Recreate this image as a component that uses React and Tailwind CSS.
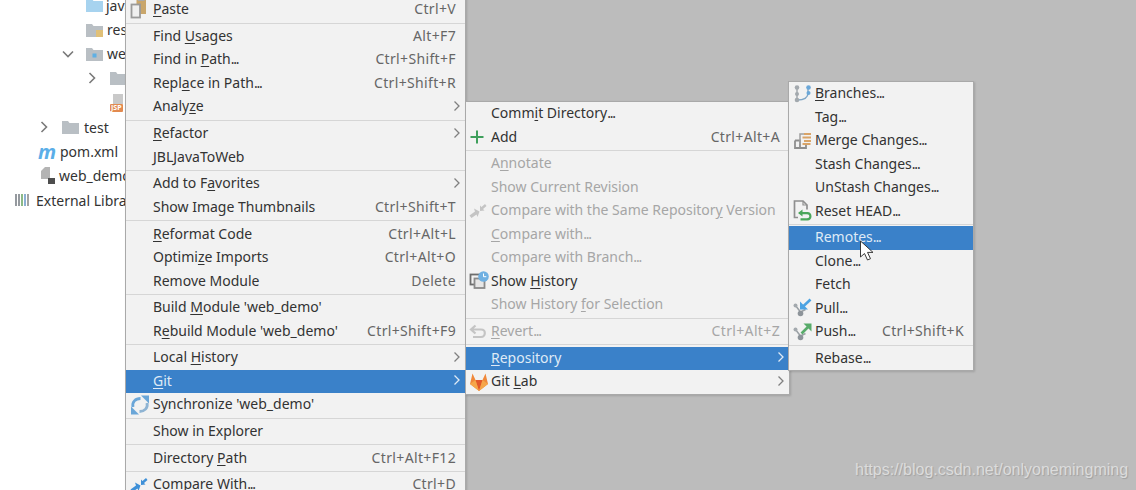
import React from "react";

const FONT = "[font-family:'Noto_Sans','Open_Sans',sans-serif]";

const Branches = () => (
  <svg width="20" height="20" viewBox="0 0 20 20" fill="none">
    <path d="M4 4v12" stroke="#a3a9ae" strokeWidth="1.500" />
    <path d="M4 16c6 0 11-1 11-7V4" stroke="#7fa6c6" strokeWidth="1.400" />
    <circle cx="4" cy="3.500" r="2.300" fill="#a3a9ae" />
    <circle cx="4" cy="10" r="2" fill="#a3a9ae" />
    <circle cx="4" cy="16" r="2.300" fill="#a3a9ae" />
    <circle cx="15.500" cy="3.500" r="2.300" fill="#6aa7d8" />
    <circle cx="15.500" cy="9" r="2" fill="#6aa7d8" />
  </svg>
);
const Merge = () => (
  <svg width="20" height="20" viewBox="0 0 20 20" fill="none">
    <path d="M2 9.500h5v7.500h6v-3M2 9.500V17h5" stroke="#8f8f8f" strokeWidth="1.800" />
    <path d="M7 13V3h5" stroke="#a0a0a0" strokeWidth="1.500" />
    <path d="M11 3h7M9.500 6.500h8.500M11 10h7M9.500 13h8" stroke="#d9a468" strokeWidth="1.800" />
  </svg>
);
const Reset = () => (
  <svg width="20" height="23" viewBox="0 0 20 23" fill="none">
    <path d="M5 18H1.500V1.500h8.500l4 4V10" stroke="#8f8f8f" strokeWidth="1.700" />
    <path d="M10 1.500v4h4" stroke="#8f8f8f" strokeWidth="1.200" />
    <path d="M9.500 10L5 13.500 9.500 17v-2.200h4.500c1.500 0 2.300.8 2.300 2s-.8 2-2.300 2H7.500V21H14.500c2.500 0 4-1.800 4-4.200s-1.500-4.200-4-4.200H9.500z" fill="#4aa65a" />
  </svg>
);
const Pull = () => (
  <svg width="20" height="20" viewBox="0 0 20 20" fill="none">
    <path d="M2.500 7.500L7.500 14l5-2.500" stroke="#9aa0a5" strokeWidth="1.500" />
    <circle cx="7.500" cy="15.500" r="2.800" fill="#8d949a" />
    <circle cx="2.500" cy="7.500" r="2" fill="#a3a9ae" />
    <path d="M17.500 1.500L9.500 9" stroke="#4ba3e3" strokeWidth="2.600" />
    <path d="M7 3.500V11.500h8z" fill="#4ba3e3" />
  </svg>
);
const Push = () => (
  <svg width="20" height="20" viewBox="0 0 20 20" fill="none">
    <path d="M2.500 7.500L7.500 14l5-2.500" stroke="#9aa0a5" strokeWidth="1.500" />
    <circle cx="7.500" cy="15.500" r="2.800" fill="#8d949a" />
    <circle cx="2.500" cy="7.500" r="2" fill="#a3a9ae" />
    <path d="M8.500 11.500L16 4" stroke="#58ab6a" strokeWidth="2.600" />
    <path d="M10.500 1.500H18.500V9.500z" fill="#58ab6a" />
  </svg>
);
const Plus = () => (
  <svg width="16" height="16" viewBox="0 0 16 16">
    <path d="M8 1.500v13M1.500 8h13" stroke="#3f9f5c" strokeWidth="2" />
  </svg>
);
const Compare = ({ color = "#3e90d8" }) => (
  <svg width="18" height="16" viewBox="0 0 18 16">
    <path d="M0.500 12.500L6 8.500 5 5.500 10.500 8.500 8.500 14 7.500 11.500 2.500 15z" fill={color} />
    <path d="M11 8V2.500L12.500 4 16 1 17.500 3 14 6 15.500 7.500z" fill={color} />
  </svg>
);
const History = () => (
  <svg width="21" height="20" viewBox="0 0 21 20" fill="none">
    <rect x="1.500" y="3.500" width="12" height="10" stroke="#6d6d6d" strokeWidth="1.800" />
    <rect x="5.500" y="7.500" width="10" height="9.500" fill="#e6e6e6" stroke="#8a8a8a" strokeWidth="1.800" />
    <circle cx="14.500" cy="5.500" r="5.300" fill="#6fb0e2" />
    <path d="M14.500 2.500v3.200h2.800" stroke="#fff" strokeWidth="1" />
  </svg>
);
const Revert = () => (
  <svg width="18" height="16" viewBox="0 0 18 16" fill="none">
    <path d="M6.500 1.500L2 5.500l4.500 4M2.500 5.500H12c2.500 0 3.800 1.500 3.800 3.500S14.500 13 12 13H4" stroke="#c4c4c4" strokeWidth="2.200" />
  </svg>
);
const GitLab = () => (
  <svg width="20" height="19" viewBox="0 0 20 19">
    <path d="M10 18.500L1 11.500 3.500 1 6.500 7.500h7L16.500 1 19 11.500z" fill="#f0883a" />
    <path d="M10 18.500L6.500 7.500h7z" fill="#e2572b" />
    <path d="M10 18.500L1 11.500l5.500-4z" fill="#f5a64a" />
    <path d="M10 18.500l9-7-5.500-4z" fill="#f5a64a" />
  </svg>
);
const Sync = () => (
  <svg width="20" height="20" viewBox="0 0 20 20" fill="none">
    <path d="M3 12C1.800 7 5.500 3.500 10.500 3.500" stroke="#6aa6d8" strokeWidth="2.800" />
    <path d="M17 8c1.200 5-2.500 8.500-7.500 8.500" stroke="#8fb4d3" strokeWidth="2.800" />
    <path d="M11 .5h8V8.500zM9 19.500H1V11.500z" fill="#6aa6d8" />
  </svg>
);
const Paste = () => (
  <svg width="18" height="22" viewBox="0 0 18 22" fill="none">
    <rect x="6.500" y="0" width="9.500" height="15" fill="#c9a66b" />
    <rect x="8" y="-2" width="6.500" height="4" fill="#a9a9a9" />
    <rect x="1.500" y="5.500" width="8.500" height="13" fill="#efefef" stroke="#9a9a9a" strokeWidth="1.800" />
  </svg>
);
const Chevron = ({ white }) => (
  <svg width="8" height="12" viewBox="0 0 8 12" fill="none" className="shrink-0">
    <path d="M1.500 1.500L6 6l-4.500 4.500" stroke={white ? "#dfeaf5" : "#808080"} strokeWidth="1.300" />
  </svg>
);

const Sep = () => <div className="h-[3.2px] flex items-center"><div className="h-px w-full bg-[#d6d6d6]" /></div>;

function Row({ label, shortcut, icon, sub, active, disabled, textX, iconX }) {
  const color = active ? "text-[#dfeaf6]" : disabled ? "text-[#a6a6a6]" : "text-[#333333]";
  return (
    <div className={`relative flex h-[23.5px] items-center pb-[2px] ${active ? "bg-[#3a81c9]" : ""} ${color}`} style={{ paddingLeft: textX }}>
      {icon && <span className="absolute top-1/2 flex -translate-y-1/2 items-center" style={{ left: iconX }}>{icon}</span>}
      <span className="whitespace-nowrap">{label}</span>
      {shortcut && <span className={`ml-auto pr-[9px] whitespace-nowrap tracking-[0.35px] ${disabled ? "text-[#a6a6a6]" : "text-[#666666]"}`}>{shortcut}</span>}
      {sub && <span className="ml-auto pr-[4px] flex"><Chevron white={active} /></span>}
    </div>
  );
}

const U = ({ children }) => <u className="underline underline-offset-2">{children}</u>;
const D = () => <span className="tracking-[-1.200px]">...</span>;

const menu1 = [
  { label: <><U>P</U>aste</>, shortcut: "Ctrl+V", icon: <Paste /> }, "-",
  { label: <>Find <U>U</U>sages</>, shortcut: "Alt+F7" },
  { label: <>Find in <U>P</U>ath<D /></>, shortcut: "Ctrl+Shift+F" },
  { label: <>Repl<U>a</U>ce in Path<D /></>, shortcut: "Ctrl+Shift+R" },
  { label: <>Analy<U>z</U>e</>, sub: 1 }, "-",
  { label: <><U>R</U>efactor</>, sub: 1 },
  { label: "JBLJavaToWeb" }, "-",
  { label: <>Add to F<U>a</U>vorites</>, sub: 1 },
  { label: "Show Image Thumbnails", shortcut: "Ctrl+Shift+T" }, "-",
  { label: <><U>R</U>eformat Code</>, shortcut: "Ctrl+Alt+L" },
  { label: <>Optimi<U>z</U>e Imports</>, shortcut: "Ctrl+Alt+O" },
  { label: "Remove Module", shortcut: "Delete" }, "-",
  { label: <>Build <U>M</U>odule 'web_demo'</> },
  { label: <>R<U>e</U>build Module 'web_demo'</>, shortcut: "Ctrl+Shift+F9" }, "-",
  { label: <>Local <U>H</U>istory</>, sub: 1 },
  { label: <><U>G</U>it</>, sub: 1, active: 1 },
  { label: <>Synchronize 'web_demo'</>, icon: <Sync /> }, "-",
  { label: "Show in Explorer" }, "-",
  { label: <>Directory <U>P</U>ath</>, shortcut: "Ctrl+Alt+F12" }, "-",
  { label: <>Compare With<D /></>, shortcut: "Ctrl+D", icon: <Compare /> },
];

const menu2 = [
  { label: <>Comm<U>i</U>t Directory<D /></> },
  { label: "Add", shortcut: "Ctrl+Alt+A", icon: <Plus /> }, "-",
  { label: <>A<U>n</U>notate</>, disabled: 1 },
  { label: "Show Current Revision", disabled: 1 },
  { label: <>Compare with the Same Repositor<U>y</U> Version</>, disabled: 1, icon: <Compare color="#c4c4c4" /> },
  { label: <><U>C</U>ompare with<D /></>, disabled: 1 },
  { label: <>Compare with Branch<D /></>, disabled: 1 },
  { label: <>Show <U>H</U>istory</>, icon: <History /> },
  { label: <>Show History <U>f</U>or Selection</>, disabled: 1 }, "-",
  { label: <><U>R</U>evert<D /></>, shortcut: "Ctrl+Alt+Z", disabled: 1, icon: <Revert /> }, "-",
  { label: <><U>R</U>epository</>, sub: 1, active: 1 },
  { label: <>Git <U>L</U>ab</>, sub: 1, icon: <GitLab /> },
];

const menu3 = [
  { label: <><U>B</U>ranches<D /></>, icon: <Branches /> },
  { label: <>Tag<D /></> },
  { label: <>Merge Changes<D /></>, icon: <Merge /> },
  { label: <>Stash Changes<D /></> },
  { label: <>UnStash Changes<D /></> },
  { label: <>Reset HEAD<D /></>, icon: <Reset /> }, "-",
  { label: <>Remotes<D /></>, active: 1 },
  { label: <>Clone<D /></> },
  { label: "Fetch" },
  { label: <>Pull<D /></>, icon: <Pull /> },
  { label: <>Push<D /></>, shortcut: "Ctrl+Shift+K", icon: <Push /> }, "-",
  { label: <>Rebase<D /></> },
];

function Menu({ items, className, textX, iconX }) {
  return (
    <div className={`absolute border border-[#a9a9a9] bg-[#f2f2f2] text-[14px] shadow-[1px_1px_2px_rgba(0,0,0,0.15)] ${className}`}>
      {items.map((it, i) => it === "-" ? <Sep key={i} /> : <Row key={i} {...it} textX={textX} iconX={iconX} />)}
    </div>
  );
}

const Folder = ({ color = "#b9bfc4", dot, doc }) => (
  <svg width="17" height="14" viewBox="0 0 17 14" className="shrink-0">
    <path d="M0 1h6l1.500 2H17v11H0z" fill={color} />
    {dot && <rect x="6.500" y="6.500" width="4" height="4" fill="#5fb0e4" />}
    {doc && <g fill="#e0c078"><rect x="10" y="7" width="7" height="7" /></g>}
  </svg>
);
const Arrow = ({ down }) => (
  <svg width="12" height="12" viewBox="0 0 12 12" fill="none" className="shrink-0">
    <path d={down ? "M1 3.500L6 8.500l5-5" : "M3.500 1L8.500 6l-5 5"} stroke="#7a7a7a" strokeWidth="1.600" />
  </svg>
);

function TreeRow({ pad, arrow, icon, text, gap = 4 }) {
  return (
    <div className="flex h-[24.4px] items-center whitespace-nowrap" style={{ paddingLeft: pad }}>
      {arrow}
      {icon}
      <span style={{ marginLeft: gap }}>{text}</span>
    </div>
  );
}

const Jsp = () => (
  <span className="relative block h-[18px] w-[16px] shrink-0">
    <span className="absolute left-[3px] top-0 h-[10px] w-[10px] bg-[#c9c9c9]" />
    <span className="absolute bottom-0 left-0 rounded-[1px] bg-[#e28a50] px-[1px] text-[7px] font-bold leading-[8px] text-white">JSP</span>
  </span>
);

export default function App() {
  return (
    <div className={`relative flex h-[490px] w-[1136px] overflow-hidden bg-[#bcbcbc] ${FONT}`}>
      <div className="w-[126px] shrink-0 overflow-hidden bg-white text-[14px] text-[#333333]">
        <div className="-mt-[7px]">
          <TreeRow pad={86} icon={<Folder color="#a7d3ef" />} text="java" gap={3} />
          <TreeRow pad={86} icon={<Folder doc />} text="resources" />
          <TreeRow pad={62} arrow={<Arrow down />} icon={<span className="ml-[12px] flex shrink-0"><Folder dot /></span>} text="webapp" />
          <TreeRow pad={86} arrow={<Arrow />} icon={<span className="ml-[12px] flex shrink-0"><Folder /></span>} text="WEB-INF" />
          <TreeRow pad={110} icon={<Jsp />} text="index.jsp" />
          <TreeRow pad={38} arrow={<Arrow />} icon={<span className="ml-[12px] flex shrink-0"><Folder /></span>} text="test" gap={5} />
          <TreeRow pad={38} icon={<span className="w-[17px] shrink-0 text-[20px] font-bold italic leading-none text-[#5aaee8]">m</span>} text="pom.xml" gap={5} />
          <TreeRow pad={40} icon={
            <svg width="15" height="17" viewBox="0 0 15 17" className="shrink-0"><path d="M1 4l4-4h5v12H1z" fill="#b4b4b4" /><rect x="8" y="11" width="7" height="6" fill="#4d4d4d" /></svg>
          } text="web_demo.iml" />
          <TreeRow pad={15} icon={
            <svg width="16" height="14" viewBox="0 0 16 14" className="shrink-0"><path d="M1 1v12M4 1v12" stroke="#8a8f95" strokeWidth="1.800" /><path d="M7 1v12" stroke="#7fb27a" strokeWidth="1.800" /><path d="M10 1v12" stroke="#7fa8d0" strokeWidth="1.800" /><path d="M13 1v12" stroke="#9a9a9a" strokeWidth="1.800" /></svg>
          } text="External Libraries" gap={5} />
        </div>
      </div>
      <div className="flex-1" />

      <Menu items={menu1} className="left-[125px] top-[-3px] w-[341px]" textX={27} iconX={4} />
      <Menu items={menu2} className="left-[465px] top-[101px] w-[325px]" textX={25} iconX={3} />
      <Menu items={menu3} className="left-[788px] top-[81px] w-[186px]" textX={26} iconX={4} />

      <svg width="22" height="24" viewBox="0 0 22 24" className="absolute left-[859px] top-[240px]">
        <path d="M1.500 1v16l4-3.500 3 6.500 3-1.300-3-6.300h5.500z" fill="#fff" stroke="#3a3a3a" strokeWidth="1" />
      </svg>

      <span className="absolute left-[855px] top-[461px] whitespace-nowrap font-['Liberation_Sans',sans-serif] text-[16px] leading-[18px] text-[#dcdcdc] [text-shadow:1px_1px_1px_rgba(0,0,0,0.15)]">
        https://blog.csdn.net/onlyonemingming
      </span>
    </div>
  );
}
